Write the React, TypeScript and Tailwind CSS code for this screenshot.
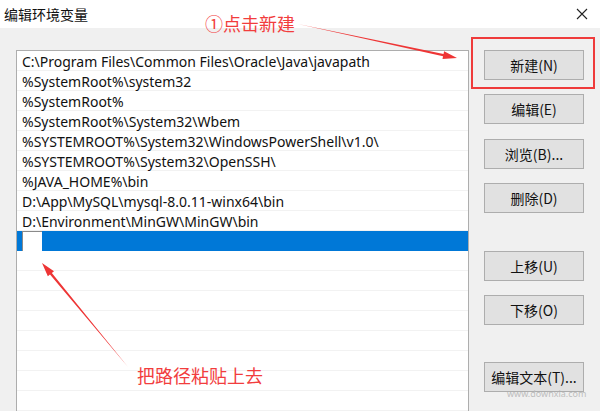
import React from "react";

const rows = [
  "C:\\Program Files\\Common Files\\Oracle\\Java\\javapath",
  "%SystemRoot%\\system32",
  "%SystemRoot%",
  "%SystemRoot%\\System32\\Wbem",
  "%SYSTEMROOT%\\System32\\WindowsPowerShell\\v1.0\\",
  "%SYSTEMROOT%\\System32\\OpenSSH\\",
  "%JAVA_HOME%\\bin",
  "D:\\App\\MySQL\\mysql-8.0.11-winx64\\bin",
  "D:\\Environment\\MinGW\\MinGW\\bin",
];

const font = { fontFamily: '"Noto Sans", "Noto Sans CJK SC", sans-serif' };
const cjk = { fontFamily: '"Noto Sans CJK SC", "Noto Sans", sans-serif' };

function Btn({ label, className = "" }: { label: string; className?: string }) {
  return (
    <div
      className={`h-[30px] w-[100px] bg-[#e1e1e1] border border-[#adadad] flex items-center justify-center text-[14px] text-[#111] ${className}`}
      style={cjk}
    >
      {label}
    </div>
  );
}

export default function App() {
  return (
    <div className="relative w-[600px] h-[411px] overflow-hidden bg-[#f0f0f0]" style={font}>
      <div className="h-[28px] bg-white flex items-center justify-between pl-[4px] pr-[12px]">
        <span className="text-[14px] text-[#111] leading-none" style={cjk}>
          编辑环境变量
        </span>
        <svg width="12" height="12" viewBox="0 0 12 12">
          <path d="M1 1 L11 11 M11 1 L1 11" stroke="#222" strokeWidth="1.1" />
        </svg>
      </div>
      <div className="flex pt-[22px] pl-[16px]">
        <div className="w-[453px] h-[400px] bg-white border border-[#adadad] flex flex-col">
          {rows.map((r) => (
            <div
              key={r}
              className="h-[20px] border-b border-[#f2f2f2] pl-[5px] text-[14px] leading-[21px] text-[#111] whitespace-nowrap"
            >
              {r}
            </div>
          ))}
          <div className="h-[20px] bg-[#0078d7] flex pl-[5px]">
            <div className="w-[20px] h-[20px] bg-white border-l border-t border-[#8a8a8a]" />
          </div>
          {Array.from({ length: 9 }).map((_, i) => (
            <div key={i} className="h-[20px] border-b border-[#f2f2f2]" />
          ))}
        </div>
        <div className="flex flex-col ml-[15px]">
          <Btn label="新建(N)" />
          <Btn label="编辑(E)" className="mt-[14px]" />
          <Btn label="浏览(B)..." className="mt-[15px]" />
          <Btn label="删除(D)" className="mt-[14px]" />
          <Btn label="上移(U)" className="mt-[38px]" />
          <Btn label="下移(O)" className="mt-[14px]" />
          <Btn label="编辑文本(T)..." className="mt-[37px]" />
        </div>
      </div>

      {/* red highlight box */}
      <div className="absolute left-[471px] top-[37px] w-[124px] h-[52px] border-2 border-[#ef3b3b]" />

      {/* annotation labels */}
      <div className="absolute left-[205px] top-[11px] text-[18px] leading-[24px] text-[#f23d3d]" style={cjk}>
        ①点击新建
      </div>
      <div className="absolute left-[137px] top-[363px] text-[18px] leading-[24px] text-[#f23d3d]" style={cjk}>
        把路径粘贴上去
      </div>

      {/* watermark */}
      <div className="absolute left-[507px] top-[389px] text-[9px] text-[#bdbdbd] leading-none" style={font}>
        www.downxia.com
      </div>

      <svg className="absolute left-0 top-0 pointer-events-none" width="600" height="411">
        <polygon
          points="298,24 443.55,53.93 444.1,51.2 457,58 442.5,59 443.05,56.27"
          fill="#ee3535"
        />
        <polygon
          points="128,367 51.85,273.03 54,271.24 42,263 47.84,276.34 49.99,274.55"
          fill="#ee3535"
        />
      </svg>
    </div>
  );
}
